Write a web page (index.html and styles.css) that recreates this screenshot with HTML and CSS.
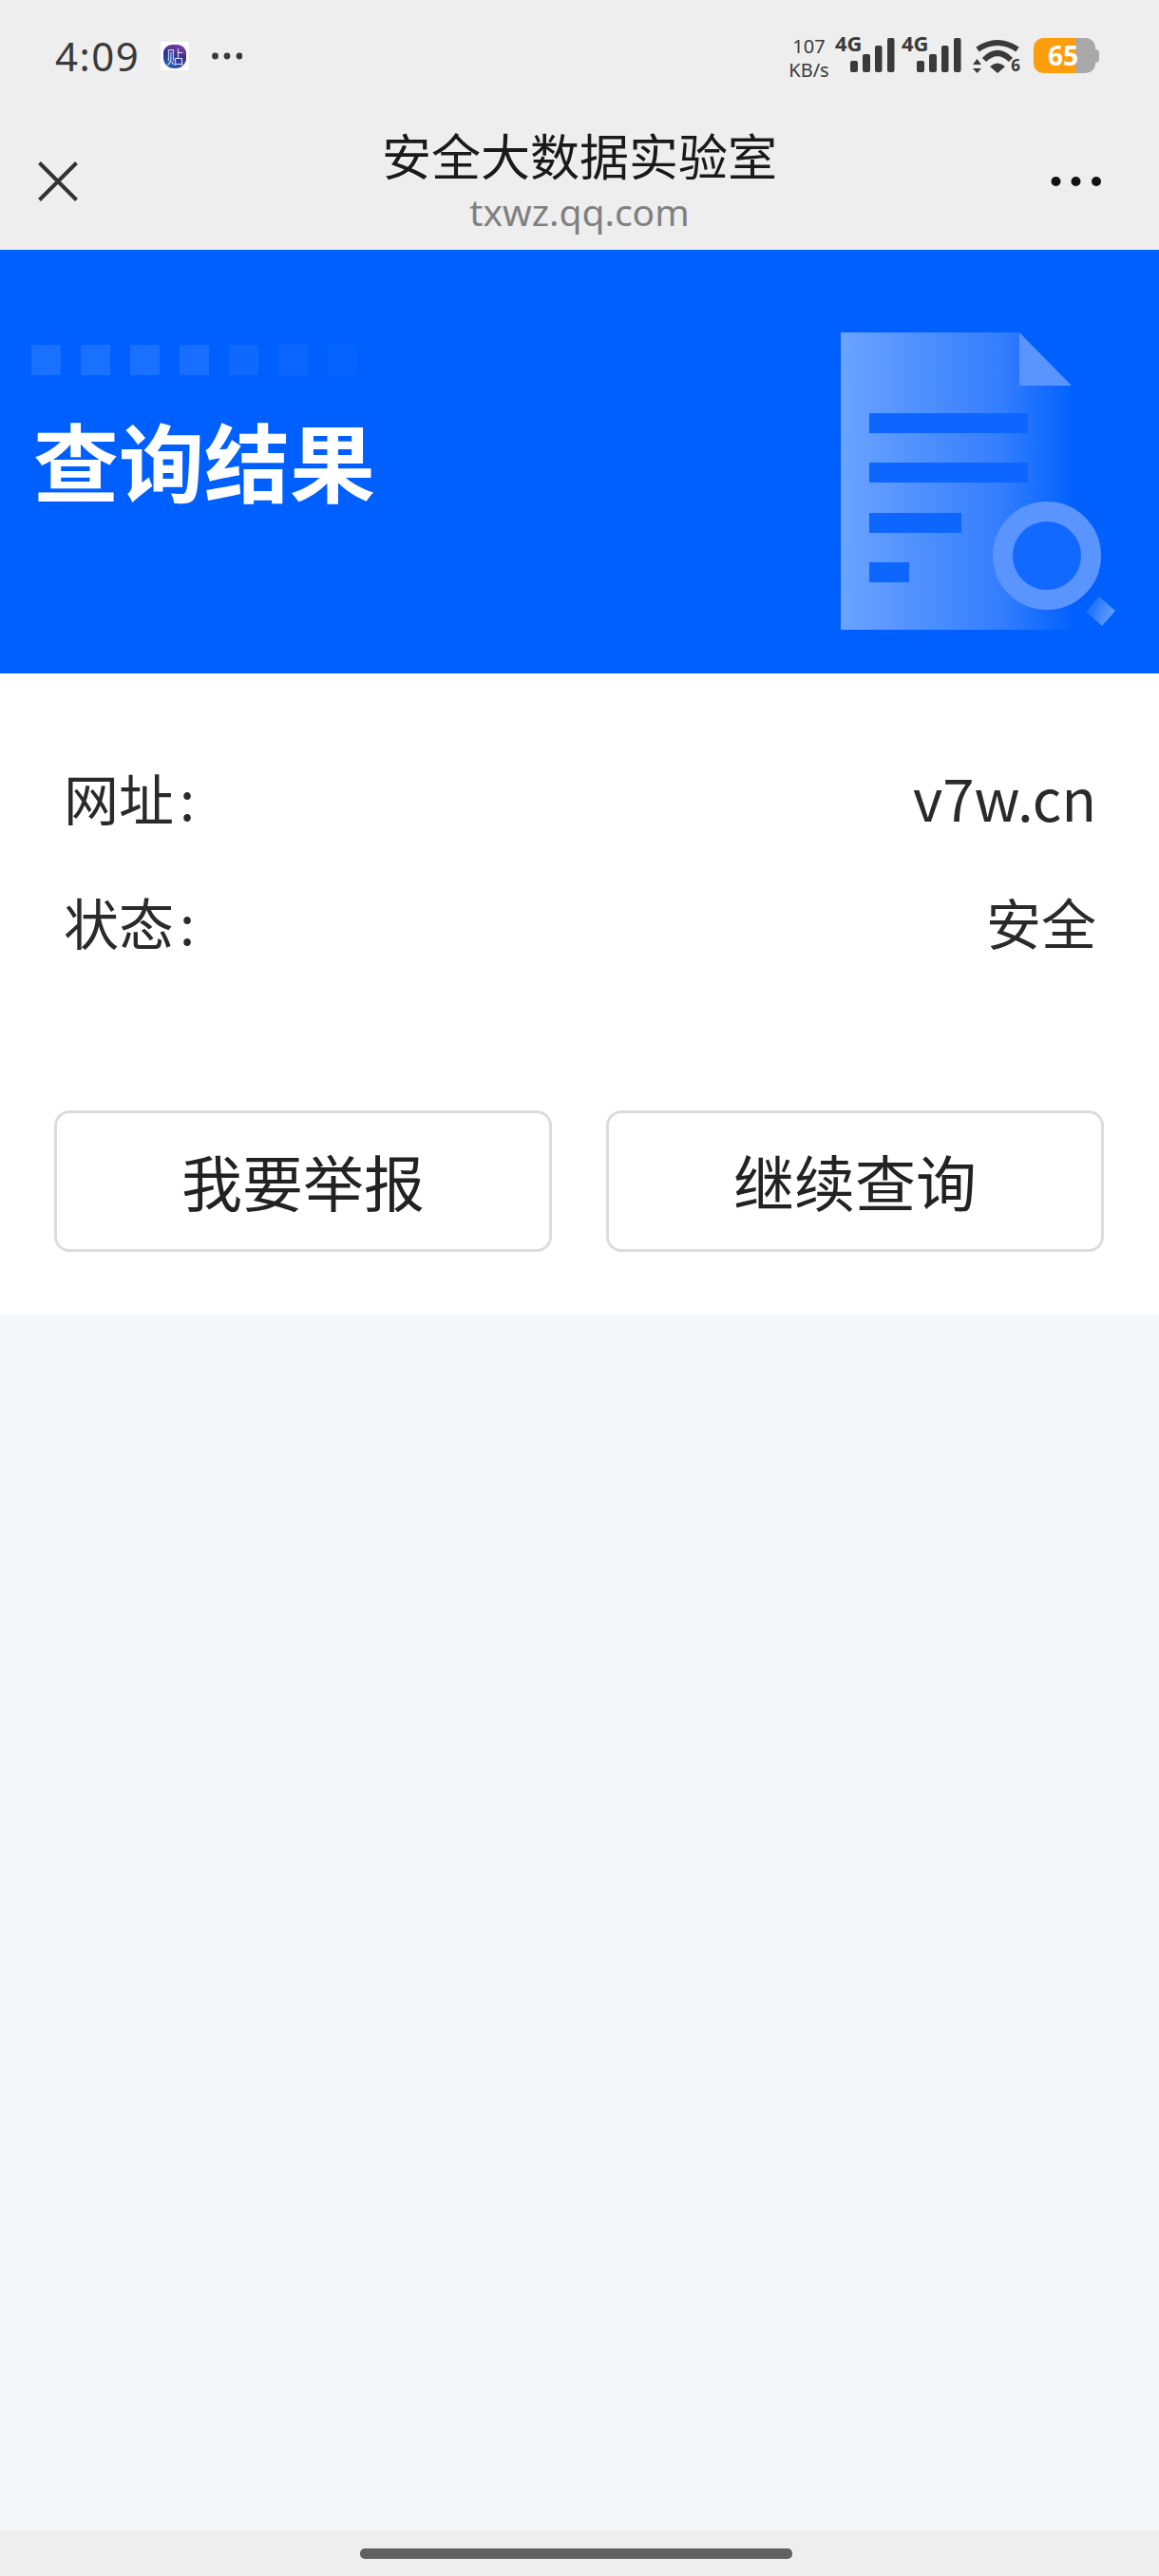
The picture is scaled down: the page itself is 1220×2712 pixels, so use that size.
FILE: index.html
```html
<!DOCTYPE html>
<html lang="zh">

<head>
    <title>安全大数据实验室</title>
    <meta charset="utf-8">
    <link rel="stylesheet" href="styles.css">
</head>

<body>
    <div class="phone-status">
        <div class="status-left">
            <span class="status-time">4:09</span>
            <span class="status-app"><span class="status-app-text">贴</span></span>
            <svg class="status-more" width="32" height="8" viewBox="0 0 32 8">
                <circle cx="3.500" cy="4" r="3.400" />
                <circle cx="16" cy="4" r="3.400" />
                <circle cx="29" cy="4" r="3.400" />
            </svg>
        </div>
        <div class="status-right">
            <div class="status-speed"><span>107</span><span>KB/s</span></div>
            <div class="status-signal">
                <span class="status-net">4G</span>
                <svg width="47" height="36" viewBox="0 0 47 36">
                    <rect x="0" y="24" width="8" height="12" rx="2" />
                    <rect x="13" y="17" width="8" height="19" rx="2" />
                    <rect x="26" y="8" width="7.500" height="28" rx="2" />
                    <rect x="39" y="0" width="7.500" height="36" rx="2" />
                </svg>
            </div>
            <div class="status-signal">
                <span class="status-net">4G</span>
                <svg width="47" height="36" viewBox="0 0 47 36">
                    <rect x="0" y="24" width="8" height="12" rx="2" />
                    <rect x="13" y="17" width="8" height="19" rx="2" />
                    <rect x="26" y="8" width="7.500" height="28" rx="2" />
                    <rect x="39" y="0" width="7.500" height="36" rx="2" />
                </svg>
            </div>
            <div class="status-wifi">
                <svg width="50" height="38" viewBox="0 0 50 38">
                    <path d="M5 12 Q26 -2 47 12" fill="none" stroke="#3a3a3a" stroke-width="6" />
                    <path d="M12 23 Q26 9 40 23" fill="none" stroke="#3a3a3a" stroke-width="6" />
                    <path d="M18 30 Q26 23 34 30 L26 37 Z" fill="#3a3a3a" />
                    <path d="M0 28 L4.500 22 L9 28 Z M0 32 L9 32 L4.500 37 Z" fill="#3a3a3a" />
                </svg>
                <span class="status-wifi-num">6</span>
            </div>
            <div class="status-battery">
                <div class="battery-body"><span class="battery-level">65</span></div>
                <div class="battery-cap"></div>
            </div>
        </div>
    </div>

    <div class="nav-bar">
        <svg class="nav-close" width="42" height="42" viewBox="0 0 42 42">
            <path d="M1.500 1.500 L40.500 40.500 M40.500 1.500 L1.500 40.500" />
        </svg>
        <div class="nav-title">
            <h1>安全大数据实验室</h1>
            <p>txwz.qq.com</p>
        </div>
        <svg class="nav-more" width="54" height="12" viewBox="0 0 54 12">
            <circle cx="5.500" cy="6" r="5" />
            <circle cx="26.500" cy="6" r="5" />
            <circle cx="48" cy="6" r="5" />
        </svg>
    </div>

    <div class="hero">
        <div class="hero-left">
            <div class="hero-dots">
                <i class="dot-1"></i><i class="dot-2"></i><i class="dot-3"></i><i class="dot-4"></i><i class="dot-5"></i><i class="dot-6"></i><i class="dot-7"></i>
            </div>
            <h2>查询结果</h2>
        </div>
        <svg class="hero-doc" width="295" height="315" viewBox="0 0 295 315">
            <defs>
                <linearGradient id="docFill" x1="0" y1="0" x2="1" y2="0">
                    <stop offset="0" stop-color="#6ba3ff" />
                    <stop offset=".7" stop-color="#337dff" />
                    <stop offset="1" stop-color="#0362ff" />
                </linearGradient>
                <linearGradient id="handleFill" x1="0" y1=".3" x2="1" y2=".7">
                    <stop offset="0" stop-color="#0f69ff" />
                    <stop offset="1" stop-color="#6ba3ff" />
                </linearGradient>
            </defs>
            <path d="M0 2 H188 V58 H243 V315 H0 Z" fill="url(#docFill)" />
            <path d="M188 2 L243 58 H188 Z" fill="#5a95ff" />
            <rect x="30" y="87" width="167" height="21" fill="#0c66ff" />
            <rect x="30" y="139" width="167" height="21" fill="#0c66ff" />
            <rect x="30" y="192" width="97" height="21" fill="#0c66ff" />
            <rect x="30" y="244" width="42" height="21" fill="#0c66ff" />
            <circle cx="217" cy="237" r="46.500" fill="#1169ff" stroke="#5a94ff" stroke-width="21" />
            <path d="M258 296 L272 280 L289 295 L275 311 Z" fill="url(#handleFill)" />
        </svg>
    </div>

    <div class="result">
        <div class="result-row">
            <span>网址<span class="result-colon">:</span></span>
            <span class="result-value">v7w.cn</span>
        </div>
        <div class="result-row">
            <span>状态<span class="result-colon">:</span></span>
            <span>安全</span>
        </div>
        <div class="result-actions">
            <button class="result-btn">我要举报</button>
            <button class="result-btn">继续查询</button>
        </div>
    </div>

    <div class="blank"></div>

    <div class="home-bar">
        <div class="home-pill"></div>
    </div>
</body>

</html>
```

FILE: styles.css
```css
html,
body {
    margin: 0;
    height: 100%;
}

body {
    display: flex;
    flex-direction: column;
    overflow: hidden;
    background-color: #f6f7fb;
    font-family: "Noto Sans CJK SC", "Noto Sans", sans-serif;
    color: #222;
}

.phone-status {
    height: 118px;
    box-sizing: border-box;
    padding: 36px 63px 0 58px;
    display: flex;
    justify-content: space-between;
    align-items: flex-start;
    background-color: #eee;
    color: #3a3a3a;
}

.status-left {
    display: flex;
    align-items: center;
    height: 46px;
}

.status-time {
    font-family: "Noto Sans", sans-serif;
    font-size: 42px;
    line-height: 46px;
    letter-spacing: 1.500px;
}

.status-app {
    width: 30px;
    height: 30px;
    margin-left: 22px;
    background-color: #fff;
    display: flex;
    align-items: center;
    justify-content: center;
}

.status-app-text {
    width: 24px;
    height: 25px;
    border-radius: 9px 9px 11px 11px;
    background: linear-gradient(200deg, #8f3fa3, #2b2f90 50%, #2a6cc4);
    color: #fff;
    font-size: 18px;
    line-height: 25px;
    font-weight: 300;
    text-align: center;
}

.status-more {
    margin-left: 24px;
    fill: #3a3a3a;
}

.status-right {
    display: flex;
    align-items: flex-start;
    margin-top: 4px;
}

.status-speed {
    width: 47px;
    margin-left: 3px;
    display: flex;
    flex-direction: column;
    align-items: center;
    font-family: "Noto Sans", sans-serif;
    font-size: 20px;
    line-height: 25px;
    margin-top: -4px;
}

.status-signal {
    display: flex;
    position: relative;
    width: 62px;
    margin-left: 5px;
    height: 37px;
    justify-content: flex-end;
}

.status-signal + .status-signal {
    margin-left: 8px;
}

.status-signal svg {
    fill: #3a3a3a;
}

.status-net {
    position: absolute;
    left: -1px;
    top: -7px;
    font-family: "Noto Sans", sans-serif;
    font-size: 22px;
    line-height: 24px;
    font-weight: 700;
}

.status-wifi {
    position: relative;
    width: 50px;
    margin-left: 12px;
}

.status-wifi-num {
    position: absolute;
    right: 0;
    top: 19px;
    font-family: "Noto Sans", sans-serif;
    font-size: 17px;
    line-height: 20px;
    font-weight: 700;
}

.status-battery {
    display: flex;
    align-items: center;
    margin-left: 14px;
    height: 37px;
}

.battery-body {
    width: 65px;
    height: 37px;
    border-radius: 10px;
    background: linear-gradient(90deg, #ff9e0d 0, #ff9e0d 68%, #a9a9a9 68%);
}

.battery-level {
    display: block;
    padding-left: 15px;
    font-family: "Noto Sans", sans-serif;
    font-size: 28px;
    line-height: 37px;
    font-weight: 700;
    color: #fff;
}

.battery-cap {
    width: 4px;
    height: 14px;
    border-radius: 0 4px 4px 0;
    background-color: #a9a9a9;
}

.nav-bar {
    height: 145px;
    box-sizing: border-box;
    padding: 0 40px;
    display: grid;
    grid-template-columns: 1fr auto 1fr;
    align-items: center;
    background-color: #eee;
}

.nav-close {
    stroke: #333;
    stroke-width: 4;
    margin-top: 1px;
    fill: none;
}

.nav-more {
    justify-self: end;
    fill: #111;
    margin: 0 20px 0 0;
}

.nav-title {
    text-align: center;
    margin-top: -5px;
}

.nav-title h1 {
    margin: 0;
    font-size: 52px;
    line-height: 70px;
    font-weight: 400;
    color: #1a1a1a;
}

.nav-title p {
    margin: 0;
    font-family: "Noto Sans", sans-serif;
    font-size: 39px;
    line-height: 50px;
    color: #808080;
}

.hero {
    height: 446px;
    box-sizing: border-box;
    display: flex;
    justify-content: space-between;
    padding: 85px 40px 0 33px;
    background-color: #0060ff;
}

.hero-dots {
    display: flex;
    gap: 21px;
    margin-top: 15px;
}

.hero-dots i {
    display: block;
    width: 31px;
    height: 32px;
    background-color: #fff;
}

.dot-1 { opacity: .1; }
.dot-2 { opacity: .1; }
.dot-3 { opacity: .1; }
.dot-4 { opacity: .09; }
.dot-5 { opacity: .06; }
.dot-6 { opacity: .04; }
.dot-7 { opacity: .02; }

.hero-left h2 {
    margin: 28px 0 0 2px;
    font-size: 90px;
    line-height: 120px;
    font-weight: 700;
    color: #fff;
}

.result {
    height: 675px;
    box-sizing: border-box;
    padding: 89px 58px 0 57px;
    background-color: #fff;
}

.result-row {
    display: flex;
    justify-content: space-between;
    padding: 0 8px 0 10px;
    margin-bottom: 49px;
    font-size: 58px;
    line-height: 82px;
    color: #2a2a2a;
}

.result-colon {
    margin-left: 6px;
}

.result-value {
    font-size: 60px;
}

.result-actions {
    display: flex;
    justify-content: space-between;
    margin-top: 158px;
}

.result-btn {
    width: 524px;
    height: 149px;
    padding: 0 0 3px;
    border: 3px solid #dcdcdc;
    border-radius: 16px;
    background-color: #fff;
    font-family: inherit;
    font-size: 64px;
    color: #222;
}

.blank {
    flex: 1;
}

.home-bar {
    height: 48px;
    box-sizing: border-box;
    padding-top: 19px;
    background-color: #eee;
}

.home-pill {
    width: 455px;
    height: 11px;
    margin-left: 379px;
    border-radius: 5px;
    background-color: #616161;
}
```
